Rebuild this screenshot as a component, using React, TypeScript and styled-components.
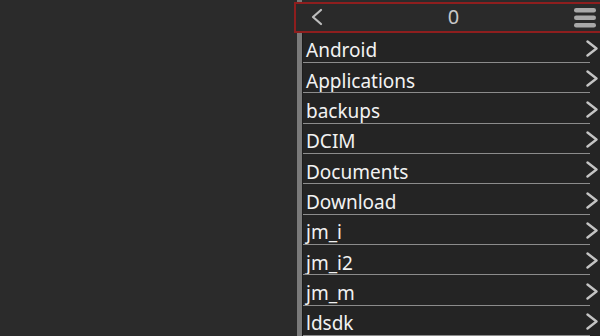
import * as React from 'react';
import styled, { createGlobalStyle } from 'styled-components';

const GlobalStyle = createGlobalStyle`
  html, body {
    margin: 0;
    padding: 0;
    background: #2b2b2b;
    overflow: hidden;
  }
  body {
    font-family: "Noto Sans", "Open Sans", sans-serif;
  }
`;

const Screen = styled.div`
  width: 600px;
  height: 336px;
  display: flex;
  flex-direction: row;
  background: #2b2b2b;
  overflow: hidden;
`;

const Empty = styled.div`
  width: 297px;
  flex: none;
`;

const Panel = styled.div`
  width: 308px;
  flex: none;
  display: flex;
  flex-direction: column;
  border-left: 5px solid #7a7a7a;
  box-sizing: border-box;
`;

const Header = styled.div`
  box-sizing: border-box;
  height: 34px;
  margin: 2px -6px 0 -8px;
  border: 2px solid #8e1e1e;
  background: #2a2a2a;
  display: flex;
  align-items: center;
  padding: 0 12px 0 14px;
  position: relative;
  z-index: 1;
`;

const Title = styled.div`
  flex: 1;
  text-align: center;
  color: #c8c8c8;
  font-size: 20px;
  line-height: 1;
  padding-left: 10px;
`;

const List = styled.ul`
  list-style: none;
  margin: 0;
  padding: 0;
  display: flex;
  flex-direction: column;
`;

const Row = styled.li`
  box-sizing: border-box;
  height: 30.33px;
  flex: none;
  display: flex;
  align-items: center;
  padding: 0 0 0 3px;
  background: #242424;
  border-left: 1px solid #1b1b1b;
  position: relative;

  &:after {
    content: '';
    position: absolute;
    left: 0;
    right: 15px;
    bottom: 0;
    height: 1px;
    background: #8c8c8c;
  }
`;

const Name = styled.span`
  flex: 1;
  color: #f2f2f2;
  font-size: 19px;
  line-height: 1;
  padding-top: 6px;
`;

const Chevron = styled.svg`
  flex: none;
  margin-right: 6px;
  margin-top: 1px;
`;

const folders = [
  'Android',
  'Applications',
  'backups',
  'DCIM',
  'Documents',
  'Download',
  'jm_i',
  'jm_i2',
  'jm_m',
  'ldsdk'
];

const BackIcon = () => (
  <svg width="14" height="18" viewBox="0 0 14 18">
    <path d="M11 2 L3 9 L11 16" fill="none" stroke="#bdbdbd" strokeWidth="2.2" strokeLinecap="round" strokeLinejoin="round" />
  </svg>
);

const MenuIcon = () => (
  <svg width="24" height="22" viewBox="0 0 24 22">
    <rect x="1" y="2" width="22" height="4.5" rx="2.2" fill="#a9a9a9" />
    <rect x="1" y="9.5" width="22" height="4.5" rx="2.2" fill="#a9a9a9" />
    <rect x="1" y="17" width="22" height="4.5" rx="2.2" fill="#a9a9a9" />
  </svg>
);

export default function App() {
  return (
    <>
      <GlobalStyle />
      <Screen>
        <Empty />
        <Panel>
          <Header>
            <BackIcon />
            <Title>0</Title>
            <MenuIcon />
          </Header>
          <List>
            {folders.map(name => (
              <Row key={name}>
                <Name>{name}</Name>
                <Chevron width="14" height="17" viewBox="0 0 14 17">
                  <path d="M2.5 1.5 L11.5 8.5 L2.5 15.5" fill="none" stroke="#c4c4c4" strokeWidth="2.4" strokeLinecap="round" strokeLinejoin="round" />
                </Chevron>
              </Row>
            ))}
          </List>
        </Panel>
      </Screen>
    </>
  );
}
